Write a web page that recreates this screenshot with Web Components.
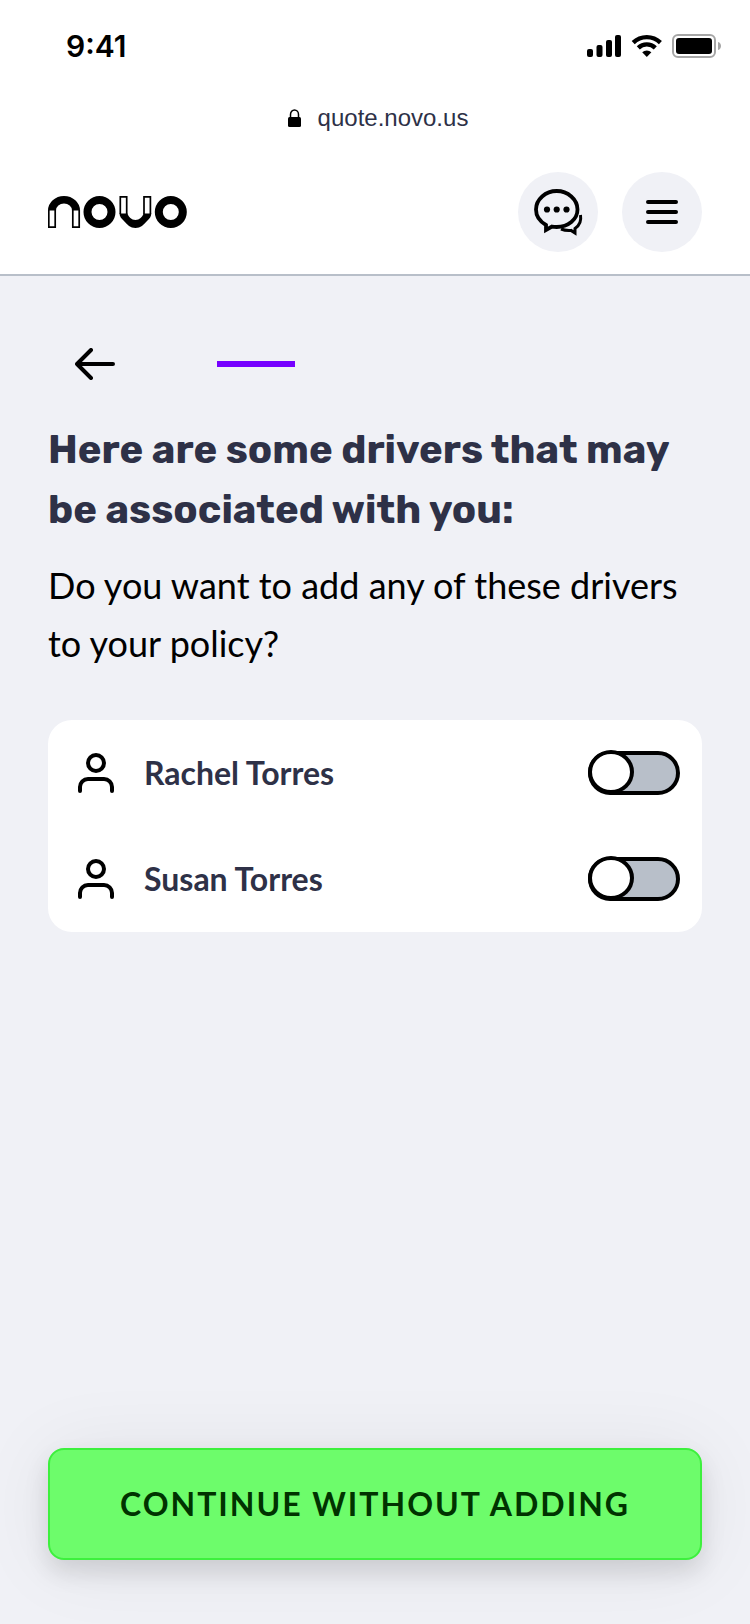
<!DOCTYPE html>
<html lang="en">
<head>
<meta charset="UTF-8">
<meta name="viewport" content="width=device-width, initial-scale=1.0">
<title>Novo</title>
<style>
  :root {
    --ink: #2e3147;
    --grey: #f0f1f6;
    --line: #b8bfc9;
    --purple: #7600ff;
    --green: #6dfc6b;
    --green-line: #3df03d;
    --gutter: 48px;
  }

  body {
    margin: 0;
    color: #000;
    background: var(--grey);
    font-family: Lato, "Liberation Sans", sans-serif;
  }
</style>
</head>
<body>

<novo-app>
  <status-bar slot="top" time="9:41"></status-bar>
  <address-bar slot="top">quote.novo.us</address-bar>
  <site-header slot="top"></site-header>

  <step-nav></step-nav>
  <page-intro>
    <span slot="title">Here are some drivers that may be associated with you:</span>
    Do you want to add any of these drivers to your policy?
  </page-intro>
  <driver-list>
    <driver-row>Rachel Torres</driver-row>
    <driver-row>Susan Torres</driver-row>
  </driver-list>

  <continue-button slot="bottom">Continue without adding</continue-button>
</novo-app>

<script>
class NovoApp extends HTMLElement {
  constructor() {
    super();
    this.attachShadow({ mode: "open" });
    this.shadowRoot.innerHTML = `
      <style>
        :host {
          display: flex;
          flex-direction: column;
          min-height: 100vh;
        }
        .top {
          background: white;
          border-bottom: 2px solid var(--line);
        }
        main {
          flex: 1;
          padding: 60px var(--gutter) 48px;
        }
        footer {
          padding: 0 var(--gutter) 64px;
        }
      </style>
      <div class="top"><slot name="top"></slot></div>
      <main><slot></slot></main>
      <footer><slot name="bottom"></slot></footer>
    `;
  }
}
customElements.define("novo-app", NovoApp);

class StatusBar extends HTMLElement {
  constructor() {
    super();
    this.attachShadow({ mode: "open" });
    this.shadowRoot.innerHTML = `
      <style>
        :host {
          display: flex;
          align-items: center;
          justify-content: space-between;
          padding: 0 28px 0 66px;
          height: 92px;
        }
        time {
          font: 600 30px/40px Inter, sans-serif;
        }
        .icons {
          display: flex;
          align-items: center;
          gap: 9px;
        }
        svg {
          display: block;
        }
      </style>
      <time></time>
      <div class="icons">
        <svg width="36" height="24" viewBox="0 0 36 24">
          <rect x="1" y="15" width="6" height="8" rx="2"/>
          <rect x="10.500" y="11" width="6" height="12" rx="2"/>
          <rect x="20" y="6" width="6" height="17" rx="2"/>
          <rect x="29" y="1" width="6" height="22" rx="2"/>
        </svg>
        <svg width="32" height="24" viewBox="0 0 32 24">
          <g fill="none" stroke="#000" stroke-width="4.4">
            <path d="M2.2 8.6a19.6 19.6 0 0 1 27.2 0"/>
            <path d="M7.3 13.8a12.3 12.3 0 0 1 17 0"/>
          </g>
          <path d="M11.2 18.2a7 7 0 0 1 9.2 0l-4.6 4.8z"/>
        </svg>
        <svg width="50" height="24" viewBox="0 0 50 24">
          <rect x="1" y="1" width="42" height="22" rx="5" fill="none" stroke="#a6a6a6" stroke-width="2"/>
          <rect x="4" y="4" width="36" height="16" rx="3"/>
          <path d="M46 8c4 1 4 7 0 8z" fill="#a6a6a6"/>
        </svg>
      </div>
    `;
    this.shadowRoot.querySelector("time").textContent = this.getAttribute("time");
  }
}
customElements.define("status-bar", StatusBar);

class AddressBar extends HTMLElement {
  constructor() {
    super();
    this.attachShadow({ mode: "open" });
    this.shadowRoot.innerHTML = `
      <style>
        :host {
          display: flex;
          align-items: center;
          justify-content: center;
          gap: 16px;
          height: 52px;
          color: var(--ink);
          font: 400 24px/32px "Liberation Sans", sans-serif;
        }
      </style>
      <svg width="20" height="20" viewBox="0 0 20 20">
        <rect x="6" y="9" width="13" height="10" rx="1.500" fill="#000"/>
        <path d="M8.500 10V6.500a4 4.500 0 0 1 8 0V10" fill="none" stroke="#000" stroke-width="1.500"/>
      </svg>
      <span><slot></slot></span>
    `;
  }
}
customElements.define("address-bar", AddressBar);

class SiteHeader extends HTMLElement {
  constructor() {
    super();
    this.attachShadow({ mode: "open" });
    this.shadowRoot.innerHTML = `
      <style>
        :host {
          display: flex;
          align-items: center;
          justify-content: space-between;
          padding: 28px var(--gutter) 22px;
        }
        nav {
          display: flex;
          gap: 24px;
        }
        button {
          display: grid;
          place-items: center;
          width: 80px;
          height: 80px;
          padding: 0;
          border: 0;
          border-radius: 50%;
          background: var(--grey);
        }
        svg {
          display: block;
        }
      </style>
      <a href="#" aria-label="Novo home">
        <svg width="140" height="32" viewBox="0 0 140 32">
          <path d="M0 14.500A16 14.500 0 0 1 32 14.500H24A8 7 0 0 0 8 14.500z"/>
          <path d="M.8 14v17.200h6.400V14M24.800 14v17.200h6.400V14" fill="none" stroke="#000" stroke-width="1.700"/>
          <circle cx="51.500" cy="16" r="12" fill="none" stroke="#000" stroke-width="8"/>
          <path d="M71.500 17.500h8c1 3.500 4 6.500 8 6.500s7-3 8-6.500h7.800c0 3-1.800 5-3.800 7-4 4.500-6.800 7.500-12 7.500s-8-3-12-7.500c-2-2-4-4-4-7z"/>
          <path d="M72.300 18V.800h6.400V18M96 18V.800h6.400V18" fill="none" stroke="#000" stroke-width="1.700"/>
          <circle cx="122.800" cy="16" r="12" fill="none" stroke="#000" stroke-width="8"/>
        </svg>
      </a>
      <nav>
        <button aria-label="Chat">
          <svg width="52" height="52" viewBox="0 0 52 52">
            <path d="M14 39C8 35.500 4 30 4 23.500 4 13.500 13.500 5 24.700 5S45.500 13.500 45.500 23.500 36 41 24.700 41c-1.700 0-3.200-.100-4.700-.400L14 44z" fill="none" stroke="#000" stroke-width="3.800"/>
            <path d="M48.500 29c1 6-1 10.500-5.500 13.500v4.500l-4-2.600c-3.500.300-7-.200-10-1.400" fill="none" stroke="#000" stroke-width="3"/>
            <circle cx="15" cy="23.500" r="3.100"/>
            <circle cx="24.700" cy="23.500" r="3.100"/>
            <circle cx="34.500" cy="23.500" r="3.100"/>
          </svg>
        </button>
        <button aria-label="Menu">
          <svg width="32" height="24" viewBox="0 0 32 24" stroke="#000" stroke-width="4" stroke-linecap="round">
            <path d="M2 2h28M2 12h28M2 22h28"/>
          </svg>
        </button>
      </nav>
    `;
  }
}
customElements.define("site-header", SiteHeader);

class StepNav extends HTMLElement {
  constructor() {
    super();
    this.attachShadow({ mode: "open" });
    this.shadowRoot.innerHTML = `
      <style>
        :host {
          display: flex;
          align-items: center;
          gap: 75px;
          margin-bottom: 28px;
        }
        button {
          display: grid;
          place-items: center;
          width: 94px;
          height: 56px;
          padding: 0;
          border: 0;
          background: none;
        }
        .bar {
          width: 78px;
          height: 6px;
          background: var(--purple);
        }
      </style>
      <button aria-label="Back">
        <svg width="40" height="32" viewBox="0 0 40 32" fill="none" stroke="#000" stroke-width="4" stroke-linecap="round" stroke-linejoin="round">
          <path d="M38 16H2M16 2L2 16l14 14"/>
        </svg>
      </button>
      <div class="bar" role="progressbar" aria-label="Progress"></div>
    `;
  }
}
customElements.define("step-nav", StepNav);

class PageIntro extends HTMLElement {
  constructor() {
    super();
    this.attachShadow({ mode: "open" });
    this.shadowRoot.innerHTML = `
      <style>
        :host {
          display: block;
          margin-bottom: 48px;
        }
        h1 {
          margin: 0 0 16px;
          color: var(--ink);
          font: 700 40px/60px Rubik, Inter, sans-serif;
        }
        p {
          margin: 0;
          font-size: 36px;
          line-height: 58px;
        }
      </style>
      <h1><slot name="title"></slot></h1>
      <p><slot></slot></p>
    `;
  }
}
customElements.define("page-intro", PageIntro);

class DriverList extends HTMLElement {
  constructor() {
    super();
    this.attachShadow({ mode: "open" });
    this.shadowRoot.innerHTML = `
      <style>
        :host {
          display: block;
          border-radius: 24px;
          background: white;
        }
      </style>
      <slot></slot>
    `;
  }
}
customElements.define("driver-list", DriverList);

class DriverRow extends HTMLElement {
  constructor() {
    super();
    this.attachShadow({ mode: "open" });
    this.shadowRoot.innerHTML = `
      <style>
        :host {
          display: block;
        }
        label {
          display: flex;
          align-items: center;
          gap: 26px;
          height: 106px;
          padding: 0 22px 0 26px;
        }
        .name {
          flex: 1;
          color: var(--ink);
          font-size: 32px;
          font-weight: 700;
          line-height: 48px;
        }
        input {
          appearance: none;
          box-sizing: border-box;
          width: 92px;
          height: 44px;
          margin: 0;
          border: 4px solid #000;
          border-radius: 22px;
          background: var(--line);
        }
        input::before {
          content: "";
          display: block;
          box-sizing: border-box;
          width: 46px;
          height: 44px;
          margin: -5px 0 0 -4px;
          border: 4px solid #000;
          border-radius: 50%;
          background: white;
        }
        input:checked {
          background: var(--green);
        }
        input:checked::before {
          margin-left: 42px;
        }
      </style>
      <label>
        <svg width="44" height="44" viewBox="0 0 44 44" fill="none" stroke="#000" stroke-width="4" stroke-linecap="round">
          <circle cx="22" cy="12" r="8"/>
          <path d="M6 40v-4a8 8 0 0 1 8-8h16a8 8 0 0 1 8 8v4"/>
        </svg>
        <span class="name"><slot></slot></span>
        <input type="checkbox" role="switch">
      </label>
    `;
  }
}
customElements.define("driver-row", DriverRow);

class ContinueButton extends HTMLElement {
  constructor() {
    super();
    this.attachShadow({ mode: "open" });
    this.shadowRoot.innerHTML = `
      <style>
        :host {
          display: block;
        }
        button {
          display: block;
          width: 100%;
          height: 112px;
          padding: 0;
          border: 2px solid var(--green-line);
          border-radius: 16px;
          color: #003300;
          background: var(--green);
          box-shadow: 0 12px 24px rgba(0, 0, 0, .12), 0 4px 80px rgba(0, 0, 0, .07);
          font: 700 32px/48px Lato, sans-serif;
          letter-spacing: 2px;
          text-transform: uppercase;
        }
      </style>
      <button><slot></slot></button>
    `;
  }
}
customElements.define("continue-button", ContinueButton);
</script>
</body>
</html>
